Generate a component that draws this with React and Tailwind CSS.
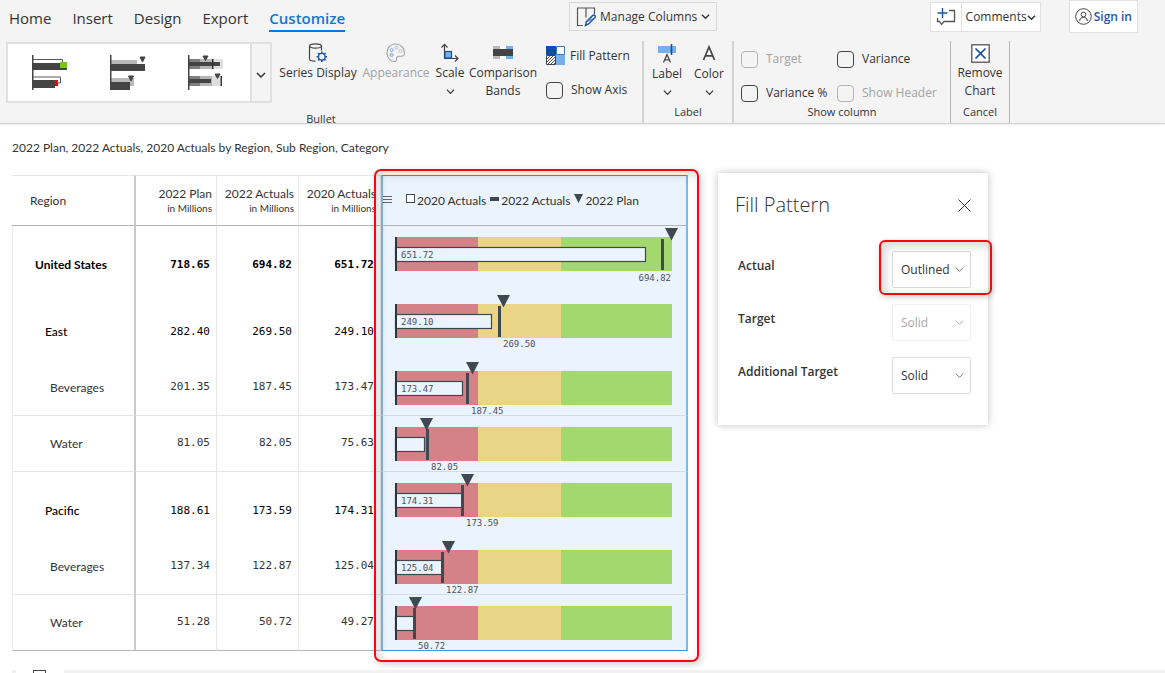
import React from "react";

const tabs = ["Home", "Insert", "Design", "Export", "Customize"];

const rows = [
  { name: "United States", pad: "pl-[22px]", plan: 718.65, actual: 694.82, prev: 651.72, level: 0, line: false },
  { name: "East", pad: "pl-8", plan: 282.4, actual: 269.5, prev: 249.1, level: 1, line: false },
  { name: "Beverages", pad: "pl-[37px]", plan: 201.35, actual: 187.45, prev: 173.47, level: 2, line: true },
  { name: "Water", pad: "pl-[37px]", plan: 81.05, actual: 82.05, prev: 75.63, level: 2, line: true },
  { name: "Pacific", pad: "pl-8", plan: 188.61, actual: 173.59, prev: 174.31, level: 1, line: false },
  { name: "Beverages", pad: "pl-[37px]", plan: 137.34, actual: 122.87, prev: 125.04, level: 2, line: true },
  { name: "Water", pad: "pl-[37px]", plan: 51.28, actual: 50.72, prev: 49.27, level: 2, line: true, last: true },
];

const MAX = 718.65;
const CHART_W = 276;
const X0 = 12;
const pos = (v) => Math.round(X0 + (v / MAX) * CHART_W);

function Chevron({ className = "", size = 10, stroke = "#333", width = 1.3 }) {
  return (
    <svg className={className} width={size} height={size} viewBox="0 0 10 10" fill="none" aria-hidden="true">
      <path d="M1 3l4 4 4-4" stroke={stroke} strokeWidth={width} />
    </svg>
  );
}

function Bullet({ row }) {
  const plan = pos(row.plan);
  const actual = pos(row.actual);
  const prev = pos(row.prev);
  const atEnd = row.actual > 600;
  return (
    <svg className="block overflow-visible" width="303" height="55" role="img" aria-label={`${row.name} bullet chart`}>
      <rect x={X0} y="11" width="83" height="34" fill="#d48187" />
      <rect x={X0 + 83} y="11" width="83" height="34" fill="#ead586" />
      <rect x={X0 + 166} y="11" width="111" height="34" fill="#a3d86f" />
      <rect x={X0 + 0.5} y="21.5" width={prev - X0} height="14" fill="#ebf3fd" stroke="#3f4650" strokeWidth="1.2" />
      <rect x={X0} y="11" width="2" height="34" fill="#2e343c" />
      <rect x={actual - 1} y="13" width="3" height="31" fill="#414851" />
      <path d={`M${plan - 6} 2h13l-6.5 12.5z`} fill="#414851" />
      <g fontFamily="'DejaVu Sans Mono', monospace" fontSize="9" fill="#4d5259">
        {row.prev > 100 && <text x={X0 + 6} y="32">{row.prev.toFixed(2)}</text>}
        {atEnd ? (
          <text x={X0 + CHART_W} y="55" textAnchor="end">{row.actual.toFixed(2)}</text>
        ) : (
          <text x={actual + 4} y="54">{row.actual.toFixed(2)}</text>
        )}
      </g>
    </svg>
  );
}

function StyleOne() {
  return (
    <svg width="36" height="36" viewBox="0 0 36 36" aria-hidden="true">
      <path d="M1 4.5h29.500v5M1 22h27.500v6H25" fill="none" stroke="#55585c" />
      <path d="M1 8h34v7H1zM1 25h22v8H1z" fill="#444" />
      <path d="M28 7h7v6h-7z" fill="#7ac70c" />
      <path d="M23 25h3v6h-3z" fill="#f00" />
      <path d="M0 0h1.500v35H0z" fill="#444" />
    </svg>
  );
}
function StyleTwo() {
  return (
    <svg width="36" height="36" viewBox="0 0 36 36" aria-hidden="true">
      <path d="M1 5h26v4H1zM1 23h23v8H1z" fill="#b9b9b9" />
      <path d="M1 9h34v7H1zM1 27h19v8H1z" fill="#444" />
      <path d="M30 2h5l-2.500 5zM18.500 21h5l-2.500 5z" fill="#444" stroke="#444" />
      <path d="M0 0h1.500v35H0z" fill="#444" />
    </svg>
  );
}
function StyleThree() {
  return (
    <svg width="36" height="36" viewBox="0 0 36 36" aria-hidden="true">
      <path d="M1 4h34v10H1zM1 21h31v10H1z" fill="#dedede" />
      <path d="M1 4h23v10H1zM1 21h23v10H1z" fill="#b5b5b5" />
      <path d="M1 4h11v10H1zM1 21h11v10H1z" fill="#808080" />
      <path d="M1 7h31v4H1zM1 24h22v4H1z" fill="#444" />
      <path d="M24 4h1.500v10H24zM32.500 21h1.500v10h-1.500z" fill="#333" />
      <path d="M15 1h5l-2.500 4.500zM27 19h5l-2.500 4.500z" fill="#444" stroke="#444" />
      <path d="M0 0h1.500v35H0z" fill="#444" />
    </svg>
  );
}

function SeriesIcon() {
  return (
    <svg width="20" height="20" viewBox="0 0 20 20" fill="none" aria-hidden="true">
      <g stroke="#444" strokeWidth="1.200">
        <ellipse cx="7.500" cy="3" rx="6" ry="2.200" />
        <path d="M1.500 3v13c0 1.200 2.500 2.200 6 2.200M13.500 3v4.500" />
      </g>
      <circle cx="13.800" cy="13.700" r="3.300" stroke="#1c56a8" strokeWidth="1.300" />
      <path d="M13.800 8.500v2M13.800 17v2M8.600 13.700h2M17 13.700h2M10.100 10l1.400 1.400M16.100 16l1.400 1.400M10.100 17.400l1.400-1.400M16.100 11.400l1.400-1.400" stroke="#1c56a8" strokeWidth="1.600" />
    </svg>
  );
}
function PaletteIcon() {
  return (
    <svg width="20" height="20" viewBox="0 0 20 20" fill="none" aria-hidden="true">
      <path d="M9.500 1C4.500 1 1 4.700 1 9.700 1 15 4.500 18.500 8.300 18.500c1.700 0 2.500-1 2.200-2.300-.3-2 1-3.200 2.800-3 2.200.3 5.200.3 5.200-3.300C18.500 4.500 14.500 1 9.500 1z" stroke="#a3a3a3" strokeWidth="1.100" />
      <circle cx="5.600" cy="7" r="1.500" stroke="#85a9d8" />
      <circle cx="5.600" cy="12" r="1.500" stroke="#85a9d8" fill="#c9dcf3" />
      <circle cx="10.500" cy="4.700" r="1.500" stroke="#9fc3e8" />
      <circle cx="14.500" cy="8" r="1.500" stroke="#c9c9c9" />
    </svg>
  );
}
function ScaleIcon() {
  return (
    <svg width="20" height="20" viewBox="0 0 20 20" fill="none" aria-hidden="true">
      <path d="M4.500 1.500V15.500H18M1.500 4.500l3-3.200 3 3.200M15 12.500l3 3-3 3" stroke="#444" strokeWidth="1.200" />
      <rect x="5" y="8.500" width="6.500" height="6.500" fill="#75b0ea" stroke="#144f9e" strokeWidth="1.200" />
    </svg>
  );
}
function BandsIcon() {
  return (
    <svg width="20" height="20" viewBox="0 0 20 20" aria-hidden="true">
      <path d="M0 3h7v13H0z" fill="#b9b9b9" />
      <path d="M7 3h6v13H7z" fill="#fff" />
      <path d="M13 3h7v13h-7z" fill="#75b0ea" />
      <path d="M0 6h20v7H0z" fill="#444" />
    </svg>
  );
}
function FillIcon() {
  return (
    <svg width="19" height="19" viewBox="0 0 19 19" aria-hidden="true">
      <path d="M0 0h10v9H0z" fill="#0f4fa3" />
      <path d="M10.500 .5h8v8h-8z" fill="#fff" stroke="#3a78c4" />
      <path d="M.5 9.500h9v9h-9z" fill="#fff" stroke="#444" />
      <path d="M1 13l4-4M1 16l7-7M2 18l7.500-7.500M5 18l4.500-4.500M8 18l2-2" stroke="#444" />
      <path d="M10 9h9v10h-9z" fill="#75b0ea" />
    </svg>
  );
}
function LabelIcon() {
  return (
    <svg width="20" height="20" viewBox="0 0 20 20" fill="none" aria-hidden="true">
      <path d="M1 2h18v7H1z" fill="#75b0ea" />
      <path d="M14.500 0v11" stroke="#144f9e" strokeWidth="1.600" />
      <path d="M6.500 18.500l3.500-8 3.500 8M7.700 15.800h4.600" stroke="#444" strokeWidth="1.300" />
    </svg>
  );
}
function ColorIcon() {
  return (
    <svg width="20" height="20" viewBox="0 0 20 20" fill="none" aria-hidden="true">
      <path d="M4.500 16L10 3l5.500 13M6.500 11.800h7" stroke="#444" strokeWidth="1.700" />
    </svg>
  );
}
function ManageIcon() {
  return (
    <svg width="20" height="20" viewBox="0 0 20 20" fill="none" aria-hidden="true">
      <path d="M1 1h18M1.500 1v17.500H7M10 1v9.500M18.500 1v6" stroke="#555" strokeWidth="1.200" />
      <path d="M9.500 18.500l.8-3.600 6.500-6.500c1.500-1.100 3.200.6 2.100 2.100L12.600 17z" fill="#fff" stroke="#1c56a8" strokeWidth="1.500" />
      <path d="M13 14.500l3-3" stroke="#1c56a8" />
    </svg>
  );
}
function CommentIcon() {
  return (
    <svg width="20" height="18" viewBox="0 0 20 18" fill="none" aria-hidden="true">
      <path d="M13 2.500h5.500v11H8l-2.500 3-2-3H1.500V10" stroke="#555" strokeWidth="1.300" />
      <path d="M6.500 0v10M1.500 5h10" stroke="#1c56a8" strokeWidth="1.400" />
    </svg>
  );
}
function UserIcon() {
  return (
    <svg width="17" height="17" viewBox="0 0 17 17" fill="none" stroke="#444" aria-hidden="true">
      <circle cx="8.500" cy="8.500" r="7.800" />
      <circle cx="8.500" cy="6.500" r="2.400" />
      <path d="M4.800 13V12c0-3.400 7.400-3.400 7.400 0v1" />
    </svg>
  );
}
function RemoveIcon() {
  return (
    <svg width="19" height="19" viewBox="0 0 19 19" aria-hidden="true">
      <rect x=".8" y=".8" width="17.400" height="17.400" fill="#fff" stroke="#555" strokeWidth="1.300" />
      <path d="M4.500 4.500l10 10M14.500 4.500l-10 10" stroke="#144f9e" strokeWidth="1.700" />
    </svg>
  );
}

function Tool({ icon, lines, chevron, disabled, className }) {
  return (
    <button disabled={disabled} className={`flex flex-col items-center text-[12px] leading-[18px] ${disabled ? "text-[#a3a3a3]" : "text-[#333]"} ${className}`}>
      <span className="mb-px">{icon}</span>
      {lines.map((l) => (
        <span key={l} className="whitespace-nowrap">{l}</span>
      ))}
      {chevron && <Chevron className="mt-[5px]" size={9} />}
    </button>
  );
}

function Check({ label, disabled }) {
  return (
    <label className={`flex items-center gap-2 whitespace-nowrap text-[12px] leading-[18px] ${disabled ? "text-[#a3a3a3]" : "text-[#333]"}`}>
      <input type="checkbox" disabled={disabled} className="size-[17px] shrink-0 appearance-none rounded-[4px] border border-[#444] disabled:border-[#b5b5b5] checked:bg-[#0f6fc6]" />
      {label}
    </label>
  );
}

function PatternRow({ id, label, value, disabled, highlighted }) {
  return (
    <div className="flex items-center justify-between">
      <label htmlFor={id} className="pb-[7px] text-[12px] font-semibold text-[#333]">{label}</label>
      <div className={`relative ${disabled ? "text-[#a8a8a8]" : "text-[#333]"}`}>
        <select id={id} defaultValue={value} disabled={disabled} className="block h-[37px] w-[79px] appearance-none rounded-[2px] border border-[#dcdcdc] bg-white pl-2 text-[12px] disabled:border-[#f0f0f0] disabled:opacity-100">
          <option>Outlined</option>
          <option>Solid</option>
        </select>
        <Chevron className="pointer-events-none absolute top-[14px] right-[7px]" size={9} width={0.9} stroke={disabled ? "#999" : "#555"} />
        {highlighted && (
          <div className="pointer-events-none absolute -top-[11px] -right-[21px] -bottom-[7px] -left-[13px] rounded-[6px] border-2 border-[#f8080c] shadow-[inset_3px_3px_9px_2px_rgba(0,0,0,0.14),1px_2px_6px_rgba(0,0,0,0.2)]" />
        )}
      </div>
    </div>
  );
}

export default function App() {
  return (
    <div className="flex min-h-screen flex-col overflow-x-hidden bg-white font-['Open_Sans',sans-serif] text-[#333]">
      <header className="h-[124px] shrink-0 overflow-hidden border-b border-[#d2d2d2] bg-[#f4f4f4] shadow-[0_1px_2px_rgba(0,0,0,0.08)]">
        <div className="flex h-[41px] items-start">
          <nav className="flex gap-[21px] pt-[7px] pl-[9px] text-[15px] leading-[23px]">
            {tabs.map((t) => (
              <a key={t} href={`#${t.toLowerCase()}`} className={t === "Customize" ? "border-b-2 border-[#0f78d4] font-semibold text-[#0f78d4]" : "border-b-2 border-transparent text-[#333]"}>
                {t}
              </a>
            ))}
          </nav>
          <button className="mt-[2px] ml-[224px] flex h-[29px] items-center gap-1 border border-[#d9d9d9] px-[6px] text-[12px] whitespace-nowrap">
            <ManageIcon /> Manage Columns <Chevron size={9} width={1.5} />
          </button>
          <div className="mr-[27px] ml-auto flex gap-7">
            <div className="mt-[2px] flex h-[30px] items-stretch border border-[#e2e2e2] bg-white text-[12px]">
              <button aria-label="Add comment" className="flex items-center border-r border-[#e2e2e2] px-[5px]"><CommentIcon /></button>
              <button className="flex items-center px-1">Comments<Chevron size={9} width={1.5} /></button>
            </div>
            <button className="flex h-[33px] items-center gap-[2px] border border-[#e2e2e2] bg-white px-[5px] text-[12px] font-semibold whitespace-nowrap text-[#1c56a8]">
              <UserIcon /> Sign in
            </button>
          </div>
        </div>

        <div className="flex h-[83px] items-stretch">
          <section className="flex w-[644px] shrink-0 flex-col border-r-2 border-[#d2d2d2]">
            <div className="flex h-[70px] shrink-0 items-start">
              <div className="mt-px ml-[6px] flex h-[61px] w-[266px] border-2 border-[#e0e0e0]">
                <div className="flex flex-1 items-center bg-white pl-[3px]">
                  {[StyleOne, StyleTwo, StyleThree].map((Icon, i) => (
                    <button key={i} aria-label={`Bullet style ${i + 1}`} className="flex w-[78px] justify-center"><Icon /></button>
                  ))}
                </div>
                <button aria-label="More styles" className="flex w-5 items-center justify-center border-l-2 border-[#e0e0e0] pt-1"><Chevron size={10} width={1.500} /></button>
              </div>
              <Tool className="mt-[2px] w-[92px]" icon={<SeriesIcon />} lines={["Series Display"]} />
              <Tool className="mt-[2px] w-[64px]" icon={<PaletteIcon />} lines={["Appearance"]} disabled />
              <Tool className="mt-[2px] w-[44px]" icon={<ScaleIcon />} lines={["Scale"]} chevron />
              <Tool className="mt-[2px] w-[62px]" icon={<BandsIcon />} lines={["Comparison", "Bands"]} />
              <div className="mt-[5px] ml-3 flex flex-col gap-4">
                <button className="flex items-center gap-[5px] text-[12px] leading-[18px] whitespace-nowrap"><FillIcon />Fill Pattern</button>
                <Check label="Show Axis" />
              </div>
            </div>
            <span className="text-center text-[11px] leading-[16px]">Bullet</span>
          </section>
          <section className="flex w-[90px] shrink-0 flex-col justify-between border-r-2 border-[#d2d2d2]">
            <div className="flex justify-center pt-[3px]">
              <Tool className="w-[42px]" icon={<LabelIcon />} lines={["Label"]} chevron />
              <Tool className="w-[42px]" icon={<ColorIcon />} lines={["Color"]} chevron />
            </div>
            <span className="pb-1 text-center text-[11px] leading-[16px]">Label</span>
          </section>
          <section className="flex w-[217px] shrink-0 flex-col justify-between border-r border-[#b5b5b5]">
            <div className="grid grid-cols-[88px_auto] gap-x-2 gap-y-4 pt-[9px] pl-[7px]">
              <Check label="Target" disabled />
              <Check label="Variance" />
              <Check label="Variance %" />
              <Check label="Show Header" disabled />
            </div>
            <span className="pb-1 text-center text-[11px] leading-[16px]">Show column</span>
          </section>
          <section className="flex w-[59px] shrink-0 flex-col justify-between border-r border-[#b5b5b5]">
            <Tool className="mt-[3px] w-full" icon={<RemoveIcon />} lines={["Remove", "Chart"]} />
            <span className="pb-1 text-center text-[11px] leading-[16px]">Cancel</span>
          </section>
        </div>
      </header>

      <main className="flex items-start gap-[30px] pt-4 pl-3 font-['Lato',sans-serif]">
        <div className="shrink-0">
          <h1 className="mb-[19px] text-[12px] leading-4">2022 Plan, 2022 Actuals, 2020 Actuals by Region, Sub Region, Category</h1>
          <div className="relative w-[676px]">
            <table className="w-full table-fixed border-separate border-spacing-0">
              <colgroup>
                <col className="w-[124px]" />
                <col className="w-[81px]" />
                <col className="w-[82px]" />
                <col className="w-[82px]" />
                <col />
              </colgroup>
              <thead>
                <tr className="h-[51px]">
                  <th className="border-t border-r-2 border-b border-t-[#e6e6e6] border-r-[#cbcbcb] border-b-[#b5b5b5] pl-[18px] text-left text-[12px] font-normal">Region</th>
                  {["2022 Plan", "2022 Actuals", "2020 Actuals"].map((h) => (
                    <th key={h} className="border-t border-r border-b border-t-[#e6e6e6] border-r-[#e6e6e6] border-b-[#b5b5b5] pr-1 text-right font-normal whitespace-nowrap">
                      <div className="text-[12px] leading-[15px]">{h}</div>
                      <div className="text-[10px] leading-[14px]">in Millions</div>
                    </th>
                  ))}
                  <th className="border border-x-2 border-x-[#7ab8ea] border-t-[#3f93d6] border-b-[#b5b5b5] bg-[#ebf3fd] p-0 text-[12px] font-normal">
                    <div className="flex items-center">
                      <svg width="9" height="9" className="mr-[14px]" aria-hidden="true"><path d="M0 .5h9M0 3.500h9M0 6.500h9" stroke="#666" /></svg>
                      <svg width="9" height="9" className="mr-[2px] mb-1" aria-hidden="true"><rect x=".5" y=".5" width="8" height="8" fill="#fff" stroke="#414851" /></svg>
                      2020 Actuals
                      <svg width="9" height="4" className="mr-[2px] ml-1 mb-1" aria-hidden="true"><path d="M0 0h9v4H0z" fill="#414851" /></svg>
                      2022 Actuals
                      <svg width="9" height="9" className="mr-[2px] ml-1 mb-1" aria-hidden="true"><path d="M0 0h9L4.500 9z" fill="#414851" /></svg>
                      2022 Plan
                    </div>
                  </th>
                </tr>
              </thead>
              <tbody>
                {rows.map((r, i) => {
                  const height = r.level < 2 ? "h-[67px] pt-[11px]" : "h-14";
                  const line = r.last ? "border-b border-b-[#b5b5b5]" : r.line ? "border-b border-b-[#e3e5e8]" : "";
                  const weight = r.level === 0 ? "font-bold text-black" : r.level === 1 ? "font-medium text-black" : "font-normal text-[#333]";
                  return (
                    <tr key={i}>
                      <th className={`border-r-2 border-l border-r-[#cbcbcb] border-l-[#ececec] text-left text-[12px] ${r.pad} ${height} ${line} ${weight}`}>{r.name}</th>
                      {[r.plan, r.actual, r.prev].map((v, j) => (
                        <td key={j} className={`border-r border-r-[#e6e6e6] pr-[6px] text-right font-['DejaVu_Sans_Mono',monospace] text-[11px] ${height} ${line} ${weight}`}>{v.toFixed(2)}</td>
                      ))}
                      <td className={`border-x-2 border-x-[#7ab8ea] bg-[#ebf3fd] p-0 align-top ${r.last ? "border-b border-b-[#3f93d6]" : r.line ? "border-b border-b-[#d5dce5]" : ""}`}>
                        <Bullet row={r} />
                      </td>
                    </tr>
                  );
                })}
              </tbody>
            </table>
            <div className="pointer-events-none absolute -top-[6px] -right-[11px] -bottom-[11px] left-[362px] rounded-[7px] border-2 border-[#f8080c] shadow-[inset_3px_3px_8px_1px_rgba(0,0,0,0.14),2px_2px_7px_rgba(0,0,0,0.2)]" />
          </div>
        </div>

        <aside className="mt-[33px] h-[252px] w-[270px] shrink-0 bg-white pt-5 pr-[17px] pl-[17px] font-['Open_Sans',sans-serif] shadow-[0_0_7px_rgba(0,0,0,0.25)]">
          <div className="flex items-center justify-between">
            <h2 className="text-[20px] leading-6 font-light">Fill Pattern</h2>
            <button aria-label="Close">
              <svg width="13" height="13" viewBox="0 0 13 13" aria-hidden="true"><path d="M.5 .5l12 12M12.500 .5l-12 12" stroke="#333" /></svg>
            </button>
          </div>
          <div className="mt-[34px] flex flex-col gap-4 pl-[3px]">
            <PatternRow id="actual" label="Actual" value="Outlined" highlighted />
            <PatternRow id="target" label="Target" value="Solid" disabled />
            <PatternRow id="additional" label="Additional Target" value="Solid" />
          </div>
        </aside>
      </main>

      <footer className="mt-auto ml-3 flex h-[3px] overflow-hidden bg-[#f1f1f1]">
        <div className="ml-1 w-12 bg-white pl-[17px]">
          <div className="h-4 w-[13px] border border-[#444]" />
        </div>
      </footer>
    </div>
  );
}
